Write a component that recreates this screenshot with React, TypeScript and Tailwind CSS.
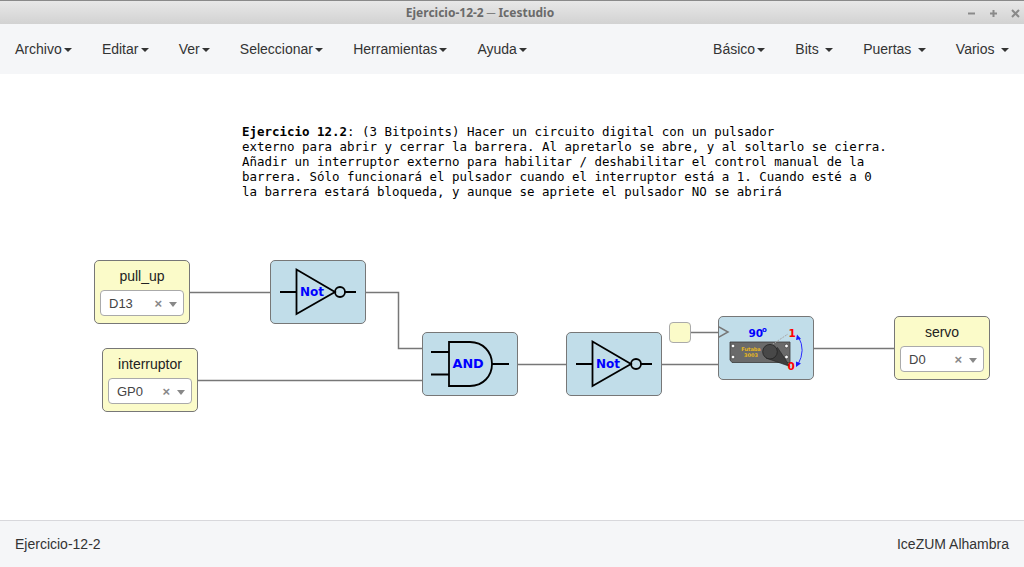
const menuLeft = ["Archivo", "Editar", "Ver", "Seleccionar", "Herramientas", "Ayuda"];
const menuRight = ["Básico", "Bits", "Puertas", "Varios"];

function MenuItem({ label, spaced }: { label: string; spaced?: boolean }) {
  return (
    <div className="px-[15px] text-[14px] text-[#333] leading-[50px] whitespace-pre">
      {label}
      {spaced ? " " : ""}
      <span className={"inline-block align-middle w-0 h-0 border-x-[4px] border-x-transparent border-t-[4px] border-t-[#333] " + (spaced ? "ml-[2.6px]" : "ml-[2.2px]")} />
    </div>
  );
}

function PinBlock({ name, value, className }: { name: string; value: string; className: string }) {
  return (
    <div className={"absolute w-[96px] h-[64px] rounded-[5px] border border-[#777] bg-[#fbfbc9] flex flex-col items-center " + className}>
      <div className="text-[14px] leading-[16px] mt-[7px] text-[#222]">{name}</div>
      <div className="mt-[6px] w-[84px] h-[26px] rounded-[4px] border border-[#aaa] bg-white flex items-center pl-[8px] pt-[1px] text-[13px] text-[#444]">
        <span className="flex-1">{value}</span>
        <span className="text-[13px] font-bold text-[#888] leading-none mr-[7px]">×</span>
        <span className="mr-[6px] w-0 h-0 border-x-[4px] border-x-transparent border-t-[5px] border-t-[#888] mt-[2px]" />
      </div>
    </div>
  );
}

function NotGate({ className }: { className: string }) {
  return (
    <div className={"absolute w-[96px] h-[64px] rounded-[5px] border border-[#777] bg-[#c1dde9] " + className}>
      <svg width="96" height="64" viewBox="0 0 96 64" className="absolute left-[-1px] top-[-1px]">
        <path d="M10 32H26.5M26.5 9.5V54L65 32ZM75 32H86" fill="none" stroke="#000" strokeWidth="1.8" />
        <circle cx="70" cy="32" r="5" fill="none" stroke="#000" strokeWidth="1.8" />
        <text x="30" y="36" fontFamily="DejaVu Sans" fontWeight="700" fontSize="12" fill="#0000ff">Not</text>
      </svg>
    </div>
  );
}

function AndGate({ className }: { className: string }) {
  return (
    <div className={"absolute w-[96px] h-[64px] rounded-[5px] border border-[#777] bg-[#c1dde9] " + className}>
      <svg width="96" height="64" viewBox="0 0 96 64" className="absolute left-[-1px] top-[-1px]">
        <path d="M9 20H27M9 42.5H27M70 32H87" fill="none" stroke="#000" strokeWidth="1.8" />
        <path d="M27 10H48C61 10 70 20 70 32C70 44 61 54 48 54H27Z" fill="none" stroke="#000" strokeWidth="1.8" />
        <text x="30.5" y="36" fontFamily="DejaVu Sans" fontWeight="700" fontSize="12.8" fill="#0000ff">AND</text>
      </svg>
    </div>
  );
}

function ServoBlock({ className }: { className: string }) {
  return (
    <div className={"absolute w-[96px] h-[64px] rounded-[5px] border border-[#777] bg-[#c1dde9] " + className}>
      <svg width="96" height="64" viewBox="0 0 96 64" className="absolute left-[-1px] top-[-1px]">
        <path d="M0 10.5L10 16L0 21.5" fill="none" stroke="#777" strokeWidth="1.5" />
        {/* servo body */}
        <path d="M12 26H72V46.5H14L12 44Z" fill="#6a6a6a" stroke="#3a3a3a" strokeWidth="0.8" />
        <circle cx="15" cy="30" r="1.8" fill="#fff" stroke="#222" strokeWidth="0.5" />
        <circle cx="15" cy="41" r="1.8" fill="#fff" stroke="#222" strokeWidth="0.5" />
        <circle cx="68.5" cy="30" r="1.8" fill="#fff" stroke="#222" strokeWidth="0.5" />
        <circle cx="68.5" cy="41" r="1.8" fill="#fff" stroke="#222" strokeWidth="0.5" />
        <text x="33" y="35" textAnchor="middle" fontFamily="DejaVu Sans" fontWeight="700" fontSize="5" fill="#e8b820">Futaba</text>
        <text x="33" y="41" textAnchor="middle" fontFamily="DejaVu Sans" fontWeight="700" fontSize="5" fill="#e8b820">3003</text>
        {/* horn */}
        <path d="M52 30L70 18" stroke="#a8a8a8" strokeWidth="1" strokeDasharray="2 1" fill="none" />
        <path d="M59.5 31.5L72 50.5L48 42Z" fill="#3e3e3e" stroke="#222" strokeWidth="0.6" />
        <circle cx="52" cy="35.7" r="7.3" fill="#484848" stroke="#222" strokeWidth="0.8" />
        {/* travel arc */}
        <path d="M80.5 21Q88 34 80 48.5" fill="none" stroke="#2a2aff" strokeWidth="1" />
        <path d="M79 18.5L83 23L78 24ZM78 51L83 47.5L78 45.5Z" fill="#1a1aff" />
        <text x="30.5" y="20.7" fontFamily="DejaVu Sans" fontWeight="700" fontSize="10.5" fill="#0000ff">90</text>
        <text x="44" y="15.5" fontFamily="DejaVu Sans" fontWeight="700" fontSize="7" fill="#0000ff">o</text>
        <text x="70.5" y="20.7" fontFamily="DejaVu Sans" fontWeight="700" fontSize="10.5" fill="#ff0000">1</text>
        <text x="69.5" y="54" fontFamily="DejaVu Sans" fontWeight="700" fontSize="10.5" fill="#ff0000">0</text>
      </svg>
    </div>
  );
}

export default function App() {
  return (
    <div className="w-[1024px] h-[567px] flex flex-col overflow-hidden bg-white" style={{ fontFamily: '"Liberation Sans", sans-serif' }}>
      {/* window title bar */}
      <div className="h-[24px] shrink-0 border-t border-t-[#8a8a8a] bg-gradient-to-b from-[#e8e8e8] to-[#d2d2d2] flex items-center relative">
        <div className="flex-1 text-center text-[12px] font-bold text-[#6a6a6a] pr-[64px]" style={{ fontFamily: '"Noto Sans", sans-serif' }}>
          Ejercicio-12-2 ─ Icestudio
        </div>
        <div className="absolute right-[4px] top-[8px] flex items-center gap-[13px]">
          <svg width="9" height="9" viewBox="0 0 9 9"><path d="M1 4.5H8" stroke="#8a8a8a" strokeWidth="2" /></svg>
          <svg width="9" height="9" viewBox="0 0 9 9"><path d="M1 4.5H8M4.5 1V8" stroke="#8a8a8a" strokeWidth="2" /></svg>
          <svg width="9" height="9" viewBox="0 0 9 9"><path d="M1 1L8 8M8 1L1 8" stroke="#8a8a8a" strokeWidth="2" /></svg>
        </div>
      </div>

      {/* menu bar */}
      <div className="h-[50px] shrink-0 bg-[#f5f6f8] flex justify-between">
        <div className="flex">
          {menuLeft.map((m) => (
            <MenuItem key={m} label={m} />
          ))}
        </div>
        <div className="flex">
          <MenuItem label={menuRight[0]} />
          {menuRight.slice(1).map((m) => (
            <MenuItem key={m} label={m} spaced />
          ))}
        </div>
      </div>

      {/* design canvas */}
      <div className="flex-1 relative">
        <div className="absolute left-[242px] top-[50px] text-[12.46px] leading-[15px] text-black whitespace-pre" style={{ fontFamily: '"DejaVu Sans Mono", monospace' }}>
          <b>Ejercicio 12.2</b>: (3 Bitpoints) Hacer un circuito digital con un pulsador{"\n"}
          externo para abrir y cerrar la barrera. Al apretarlo se abre, y al soltarlo se cierra.{"\n"}
          Añadir un interruptor externo para habilitar / deshabilitar el control manual de la{"\n"}
          barrera. Sólo funcionará el pulsador cuando el interruptor está a 1. Cuando esté a 0{"\n"}
          la barrera estará bloqueda, y aunque se apriete el pulsador NO se abrirá
        </div>

        <svg width="1024" height="446" className="absolute left-0 top-0">
          <path
            d="M190 218.5H270M366 218.5H398.5V274.5H422M198 306.5H422M518 290.5H566M662 290.5H718M690 258.5H718M814 274.5H894"
            fill="none"
            stroke="#777"
            strokeWidth="1.5"
          />
        </svg>

        <PinBlock name="pull_up" value="D13" className="left-[94px] top-[186px]" />
        <PinBlock name="interruptor" value="GP0" className="left-[102px] top-[274px]" />
        <NotGate className="left-[270px] top-[186px]" />
        <AndGate className="left-[422px] top-[258px]" />
        <NotGate className="left-[566px] top-[258px]" />
        <div className="absolute left-[669px] top-[248px] w-[22px] h-[21px] rounded-[4px] border border-[#aaa] bg-[#fbfbc9]" />
        <ServoBlock className="left-[718px] top-[242px]" />
        <PinBlock name="servo" value="D0" className="left-[894px] top-[242px]" />
      </div>

      {/* status bar */}
      <div className="h-[47px] shrink-0 border-t border-t-[#d8d8dc] bg-[#f5f6f8] flex justify-between items-center px-[15px] text-[14px] text-[#333]">
        <span>Ejercicio-12-2</span>
        <span>IceZUM Alhambra</span>
      </div>
    </div>
  );
}
